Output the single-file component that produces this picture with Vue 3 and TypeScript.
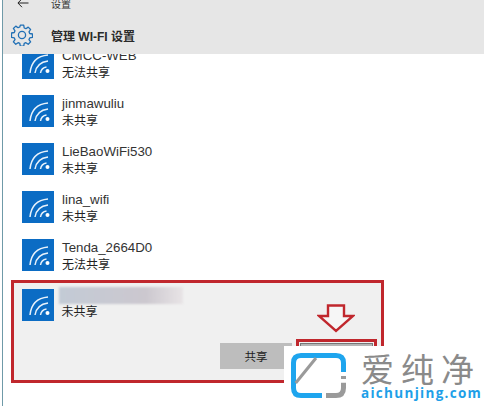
<template>
  <div class="page">
    <header class="head">
      <div class="topbar">
        <svg class="back" width="12" height="10" viewBox="0 0 12 10" fill="none" stroke="#222" stroke-width="1">
          <path d="M11.5 5H1M5 .8 .9 5 5 9.2" />
        </svg>
        <span class="crumb">设置</span>
      </div>
      <div class="titlebar">
        <svg class="gear" width="22" height="22" viewBox="0 0 22 22" fill="none" stroke="#1f6fb5" stroke-width="1.3" stroke-linejoin="round">
          <path d="M9.300 1.500h3.400l.5 2.800 1.700.7 2.300-1.600 2.400 2.400-1.600 2.300.7 1.700 2.800.5v3.400l-2.800.5-.7 1.700 1.600 2.300-2.400 2.400-2.300-1.600-1.700.7-.5 2.800H9.300l-.5-2.800-1.700-.7-2.300 1.600-2.400-2.400 1.600-2.300-.7-1.700-2.800-.5V9.300l2.800-.5.7-1.700-1.600-2.300 2.400-2.400 2.300 1.600 1.700-.7z" transform="translate(0 -.3)" />
          <circle cx="11" cy="11" r="3.600" />
        </svg>
        <span class="title">管理 WI-FI 设置</span>
      </div>
    </header>

    <div class="list">
      <div class="rows">
        <div v-for="n in networks" :key="n.name" class="row">
          <svg class="wifi" width="32" height="32" viewBox="0 0 32 32" fill="none" stroke="#e8f2fb" stroke-width="1.500">
            <rect width="32" height="32" fill="#0b6cc4" stroke="none" />
            <path d="M8 26C9 16 15 9 26 8" />
            <path d="M13 26C14 20 18 15 26 14" />
            <path d="M18.500 26C19 23 21 20.500 24.500 20" />
            <circle cx="25.500" cy="24" r="2" fill="#fff" stroke="none" />
          </svg>
          <div class="info">
            <div class="name">{{ n.name }}</div>
            <div class="status">{{ n.status }}</div>
          </div>
        </div>

        <div class="selected">
          <div class="sel-top">
            <svg class="wifi" width="32" height="32" viewBox="0 0 32 32" fill="none" stroke="#e8f2fb" stroke-width="1.500">
              <rect width="32" height="32" fill="#0b6cc4" stroke="none" />
              <path d="M8 26C9 16 15 9 26 8" />
              <path d="M13 26C14 20 18 15 26 14" />
              <path d="M18.500 26C19 23 21 20.500 24.500 20" />
              <circle cx="25.500" cy="24" r="2" fill="#fff" stroke="none" />
            </svg>
            <div class="info">
              <div class="blur-name"></div>
              <div class="status">未共享</div>
            </div>
          </div>
          <div class="actions">
            <button class="btn">共享</button>
            <div class="forget-box"><div class="forget-btn"></div></div>
          </div>
          <svg class="arrow" width="38" height="29" viewBox="0 0 38 29" fill="#f6f6f6" stroke="#c0272d" stroke-width="2.400">
            <path d="M11 1.500H27V12H36L19 27 2 12H11Z" />
          </svg>
        </div>
      </div>
    </div>

    <div class="logo">
      <svg class="logo-mark" width="60" height="48" viewBox="0 0 60 48" fill="none" stroke-width="5">
        <path d="M34 43.500H13Q5.500 43.500 5.500 36V11Q5.500 3.500 13 3.500H48Q55.500 3.500 55.500 11V20" stroke="#1ea5ee" />
        <path d="M55.500 24V27M55.500 30.700V36Q55.500 43.500 48 43.500H38" stroke="#9a9a9a" />
        <path d="M7.700 31 28 6" stroke="#9a9a9a" stroke-width="3" />
      </svg>
      <div class="logo-text">
        <div class="logo-cn">爱纯净</div>
        <div class="logo-en">aichunjing.com</div>
      </div>
    </div>
  </div>
</template>

<script setup lang="ts">
const networks = [
  { name: 'CMCC-WEB', status: '无法共享' },
  { name: 'jinmawuliu', status: '未共享' },
  { name: 'LieBaoWiFi530', status: '未共享' },
  { name: 'lina_wifi', status: '未共享' },
  { name: 'Tenda_2664D0', status: '无法共享' }
]
</script>

<style>
html, body { margin: 0; background: #fff; }
</style>

<style scoped>
.page {
  position: relative;
  width: 482px;
  height: 406px;
  margin-left: 2px;
  overflow: hidden;
  box-sizing: border-box;
  border-left: 1px solid #6f9aa8;
  font-family: "Liberation Sans", "Noto Sans CJK SC", sans-serif;
  color: #222;
}

.head {
  height: 54px;
  background: #e6e6e6;
  display: flex;
  flex-direction: column;
}

.topbar {
  height: 18px;
  margin-top: -6px;
  display: flex;
  align-items: center;
}

.back { margin-left: 14px; }
.crumb { margin-left: 22px; font-size: 10px; color: #333; }

.titlebar {
  display: flex;
  align-items: center;
  margin-top: 12px;
}

.gear { margin-left: 8px; }
.title { margin-left: 18px; font-size: 12px; font-weight: 700; color: #2a2a2a; white-space: nowrap; }

.list {
  height: 352px;
  overflow: hidden;
}

.rows { margin-top: -15px; }

.row {
  height: 48px;
  padding: 8px 0 0 19px;
  box-sizing: border-box;
  display: flex;
  gap: 8px;
}

.wifi { flex: none; }

.info { line-height: 17px; }
.name { font-size: 13.300px; color: #333; white-space: nowrap; margin-bottom: 1px; }
.status { font-size: 12px; color: #222; }

.selected {
  margin: 1px 0 0 8px;
  width: 373px;
  height: 103px;
  box-sizing: border-box;
  border: 3.500px solid #c0272d;
  background: #f0f0f0;
  position: relative;
}

.sel-top {
  display: flex;
  gap: 8px;
  padding: 5.500px 0 0 7.500px;
}

.blur-name {
  width: 124px;
  height: 17px;
  margin: -2px 0 0 -3px;
  background: linear-gradient(90deg, #c3cbd6, #ccc8cf 70%, #e8e4e6);
  filter: blur(1px);
}

.actions {
  display: flex;
  align-items: flex-start;
  justify-content: flex-end;
  gap: 4px;
  margin-top: 18px;
  padding-right: 4px;
}

.btn {
  width: 72px;
  height: 26px;
  border: 0;
  padding: 0;
  margin-top: 4px;
  background: #bdbdbd;
  color: #222;
  font: 11.500px "Noto Sans CJK SC", sans-serif;
}

.arrow {
  position: absolute;
  left: 303px;
  top: 21px;
}

.forget-box {
  width: 81px;
  height: 34px;
  box-sizing: border-box;
  border: 3px solid #c0272d;
  padding: 1px;
}

.forget-btn {
  height: 100%;
  background: #b5b5b5;
  border: 1px solid #777;
  box-sizing: border-box;
}

.logo {
  position: absolute;
  left: 281px;
  top: 346px;
  width: 201px;
  height: 60px;
  background: #fff;
  box-sizing: border-box;
  padding: 6px 0 0 4px;
  display: flex;
  gap: 13px;
}

.logo-mark { flex: none; }

.logo-text { margin-top: -1px; }

.logo-cn {
  font: 400 33px/35px "Noto Sans CJK SC", sans-serif;
  letter-spacing: 7px;
  color: #8a8a8a;
  white-space: nowrap;
}

.logo-en {
  font: 700 13.500px/14px "Open Sans", sans-serif;
  letter-spacing: 1.300px;
  color: #1e9fe8;
  white-space: nowrap;
}
</style>
